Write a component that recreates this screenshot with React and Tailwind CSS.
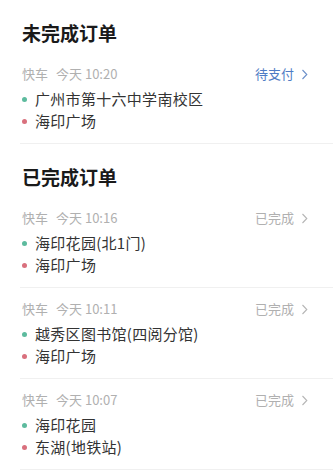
const Chevron = ({ color }) => (
  <svg width="7" height="11" viewBox="0 0 7 11" fill="none" className="ml-[7px]">
    <path d="M1.5 1 L5.8 5.5 L1.5 10" stroke={color} strokeWidth="1.1" />
  </svg>
);

const OrderItem = ({ time, status, pending, from, to }) => (
  <div className="ml-[20px] border-b border-[#f0f0f0] pl-[2px] pr-[25px] pt-[11px] pb-[11px]">
    <div className="flex h-[20px] items-center justify-between text-[13px] text-[#b0b0b0]">
      <div className="flex items-center">
        <span>快车</span>
        <span className="ml-[8px]">今天 {time}</span>
      </div>
      <div className={`flex items-center ${pending ? 'text-[#4f7cc4]' : 'text-[#b0b0b0]'}`}>
        <span>{status}</span>
        <Chevron color={pending ? '#6b8fc9' : '#b5b5b5'} />
      </div>
    </div>
    <div className="mt-[4px]">
      <div className="flex h-[22px] items-center text-[15px] tracking-[0.3px] text-[#333]">
        <span className="mr-[8px] h-[5px] w-[5px] shrink-0 rounded-full bg-[#5dbb9e]" />
        <span>{from}</span>
      </div>
      <div className="flex h-[22px] items-center text-[15px] tracking-[0.3px] text-[#333]">
        <span className="mr-[8px] h-[5px] w-[5px] shrink-0 rounded-full bg-[#d9707d]" />
        <span>{to}</span>
      </div>
    </div>
  </div>
);

const Section = ({ title, children }) => (
  <div>
    <h2 className="pl-[22px] pt-[21px] mb-[8px] h-[45px] text-[19px] leading-[24px] font-bold text-[#1a1a1a]">
      {title}
    </h2>
    {children}
  </div>
);

export default function App() {
  const done = [
    { time: '10:16', from: '海印花园(北1门)', to: '海印广场' },
    { time: '10:11', from: '越秀区图书馆(四阅分馆)', to: '海印广场' },
    { time: '10:07', from: '海印花园', to: '东湖(地铁站)' },
  ];

  return (
    <div
      className="min-h-screen w-full overflow-hidden bg-white"
      style={{ fontFamily: '"Noto Sans CJK SC", "Noto Sans", sans-serif' }}
    >
      <Section title="未完成订单">
        <OrderItem time="10:20" status="待支付" pending from="广州市第十六中学南校区" to="海印广场" />
      </Section>
      <Section title="已完成订单">
        {done.map((o) => (
          <OrderItem key={o.time} time={o.time} status="已完成" from={o.from} to={o.to} />
        ))}
      </Section>
    </div>
  );
}
